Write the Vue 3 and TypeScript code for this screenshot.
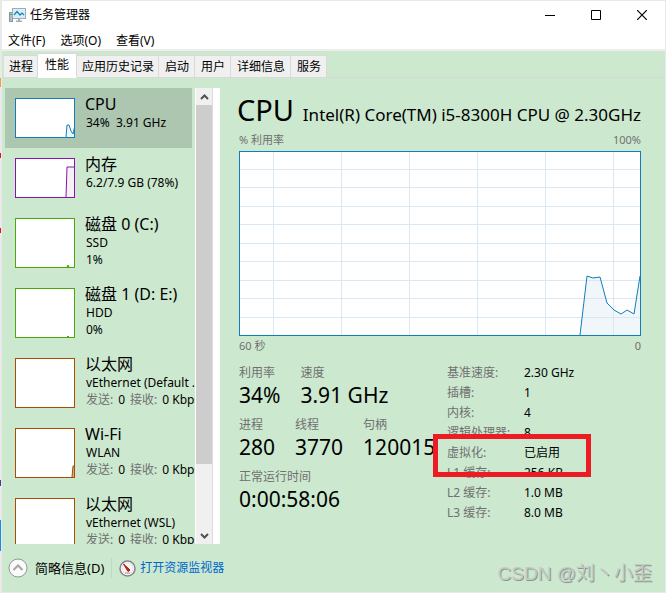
<script setup lang="ts">
import { ref } from 'vue'

interface Device {
  name: string
  lines: string[]
  network?: boolean
  color: string
  fill: string
  short?: boolean
  path?: string
}

const menus = ['文件(F)', '选项(O)', '查看(V)']
const tabs = ['进程', '性能', '应用历史记录', '启动', '用户', '详细信息', '服务']
const activeTab = ref('性能')

const devices: Device[] = [
  { name: 'CPU', lines: ['34%  3.91 GHz'], color: '#117dbb', fill: '#f1f6fa', short: true, path: 'M51 39L52 27H54L56 33L58 36L60 27' },
  { name: '内存', lines: ['6.2/7.9 GB (78%)'], color: '#8b12ae', fill: '#f4f2f4', short: true, path: 'M51 39L52 9H60' },
  { name: '磁盘 0 (C:)', lines: ['SSD', '1%'], color: '#4da60c', fill: '#4da60c', path: 'M52 49L53 47L54 49' },
  { name: '磁盘 1 (D: E:)', lines: ['HDD', '0%'], color: '#4da60c', fill: '#4da60c', path: 'M52 49L53 48L54 49' },
  { name: '以太网', lines: ['vEthernet (Default ...'], network: true, color: '#a74f01', fill: '#f3e5d8' },
  { name: 'Wi-Fi', lines: ['WLAN'], network: true, color: '#a74f01', fill: '#d9ad85', path: 'M57 49L58 38H60' },
  { name: '以太网', lines: ['vEthernet (WSL)'], network: true, color: '#a74f01', fill: '#f3e5d8' },
]
const selected = ref(0)

const stats = [
  [['利用率', '34%'], ['速度', '3.91 GHz']],
  [['进程', '280'], ['线程', '3770'], ['句柄', '120015']],
  [['正常运行时间', '0:00:58:06']],
]

const specs = [
  ['基准速度:', '2.30 GHz'],
  ['插槽:', '1'],
  ['内核:', '4'],
  ['逻辑处理器:', '8'],
  ['虚拟化:', '已启用'],
  ['L1 缓存:', '256 KB'],
  ['L2 缓存:', '1.0 MB'],
  ['L3 缓存:', '8.0 MB'],
]

const columns = [34, 102, 170, 238, 306, 374]
const rows = [19, 37, 56, 74, 93, 111, 130, 148, 167]
</script>

<template>
  <div class="window">
    <header class="top">
      <div class="titlebar">
        <svg class="app-icon" width="17" height="16" viewBox="0 0 17 16" aria-hidden="true">
          <rect x="0.5" y="5.5" width="3" height="9" fill="#b9bcbf" stroke="#8f9498" />
          <path d="M1 7.500H3" stroke="#4caf50" />
          <rect x="3.500" y="1.500" width="13" height="10" fill="#d5f0fb" stroke="#a3abb0" />
          <path d="M5 8L8 4.500L11 8L13 6L15 8" fill="none" stroke="#1784c0" stroke-width="1.200" />
          <path d="M9 12H11V13.500H13V15H7V13.500H9Z" fill="#a9adb0" />
        </svg>
        <h1>任务管理器</h1>
        <div class="controls">
          <button type="button" aria-label="最小化">
            <svg width="10" height="11" viewBox="0 0 10 11"><path d="M0 5.500H10" stroke="#000" /></svg>
          </button>
          <button type="button" aria-label="最大化">
            <svg width="10" height="10" viewBox="0 0 10 10"><path d="M.5.5H9.500V9.500H.5Z" fill="none" stroke="#000" /></svg>
          </button>
          <button type="button" aria-label="关闭">
            <svg width="10" height="10" viewBox="0 0 10 10"><path d="M0 0L10 10M10 0L0 10" stroke="#000" stroke-width="1.200" /></svg>
          </button>
        </div>
      </div>
      <nav class="menu">
        <button v-for="menu in menus" :key="menu" type="button">{{ menu }}</button>
      </nav>
    </header>

    <nav class="tabs" role="tablist">
      <button
        v-for="tab in tabs"
        :key="tab"
        type="button"
        role="tab"
        class="tab"
        :class="{ active: tab === activeTab }"
        :aria-selected="tab === activeTab"
        @click="activeTab = tab"
      >{{ tab }}</button>
    </nav>

    <div class="content">
      <aside class="sidebar">
        <div class="devices">
          <button
            v-for="(device, index) in devices"
            :key="index"
            type="button"
            class="device"
            :class="{ selected: index === selected }"
            @click="selected = index"
          >
            <svg class="thumb" width="60" :height="device.short ? 40 : 50" aria-hidden="true">
              <rect width="60" height="50" fill="#fff" />
              <path v-if="device.path" :d="device.path + 'V50H51'" :fill="device.fill" />
              <path v-if="device.path" :d="device.path" fill="none" :stroke="device.color" />
              <rect x="0.5" y="0.5" width="59" :height="device.short ? 39 : 49" fill="none" :stroke="device.color" />
            </svg>
            <span class="text">
              <span class="name">{{ device.name }}</span>
              <span v-for="line in device.lines" :key="line" class="line">{{ line }}</span>
              <span v-if="device.network" class="line traffic">
                <span class="muted">发送:</span><span>0</span><span class="muted">接收:</span><span>0 Kbps</span>
              </span>
            </span>
          </button>
        </div>
        <div class="scrollbar">
          <button type="button" aria-label="向上滚动">
            <svg width="9" height="6" viewBox="0 0 9 6"><path d="M1 5L4.500 1.500L8 5" fill="none" stroke="#505050" stroke-width="2" /></svg>
          </button>
          <div class="track"><div class="handle"></div></div>
          <button type="button" aria-label="向下滚动">
            <svg width="9" height="6" viewBox="0 0 9 6"><path d="M1 1L4.500 4.500L8 1" fill="none" stroke="#505050" stroke-width="2" /></svg>
          </button>
        </div>
        <div class="gutter"></div>
      </aside>

      <main class="detail">
        <div class="heading">
          <h2>CPU</h2>
          <span class="model">Intel(R) Core(TM) i5-8300H CPU @ 2.30GHz</span>
        </div>
        <div class="axis above"><span>% 利用率</span><span>100%</span></div>
        <svg class="chart" viewBox="0 0 402 185" preserveAspectRatio="none" role="img" aria-label="% 利用率">
          <rect width="402" height="185" fill="#fff" />
          <path d="M341 184L348 125L354 127L361 126L368 152L375 159L382 163L388 159L395 163L401 125V184Z" fill="#f1f6fa" />
          <path v-for="x in columns" :key="'c' + x" :d="`M${x}.5 1V184`" class="grid" />
          <path v-for="y in rows" :key="'r' + y" :d="`M1 ${y - 1}.5H401`" class="grid" />
          <path d="M341 184L348 125L354 127L361 126L368 152L375 159L382 163L388 159L395 163L401 125" class="curve" />
          <rect x="0.5" y="0.5" width="401" height="184" class="frame" />
        </svg>
        <div class="axis below"><span>60 秒</span><span>0</span></div>

        <div class="figures">
          <div class="stats">
            <dl v-for="(row, index) in stats" :key="index" class="stat-row">
              <div v-for="stat in row" :key="stat[0]">
                <dt>{{ stat[0] }}</dt>
                <dd>{{ stat[1] }}</dd>
              </div>
            </dl>
          </div>
          <dl class="specs">
            <div v-for="spec in specs" :key="spec[0]" class="spec" :class="{ marked: spec[0] === '虚拟化:' }">
              <dt>{{ spec[0] }}</dt>
              <dd>{{ spec[1] }}</dd>
            </div>
          </dl>
        </div>
      </main>
    </div>

    <footer class="footer">
      <button type="button" class="fewer">
        <svg width="20" height="20" viewBox="0 0 20 20" aria-hidden="true">
          <circle cx="10" cy="10" r="9" fill="#fafafa" stroke="#969696" />
          <path d="M5.500 12L10 7.500L14.500 12" fill="none" stroke="#a5a5a5" stroke-width="2" />
        </svg>
        <span>简略信息(D)</span>
      </button>
      <a href="#resource-monitor" class="monitor">
        <svg width="17" height="17" viewBox="0 0 17 17" aria-hidden="true">
          <circle cx="8.500" cy="8.500" r="7.500" fill="#fff" stroke="#858585" stroke-width="1.500" />
          <circle cx="8.500" cy="8.500" r="5.500" fill="#f5f5f5" stroke="#c8c8c8" stroke-dasharray="1 1" />
          <path d="M4.500 4L11 10L9 11.500Z" fill="#d51d1d" stroke="#b51414" />
          <path d="M6 13H11" stroke="#999" />
        </svg>
        <span>打开资源监视器</span>
      </a>
    </footer>
    <div class="watermark">CSDN @刘丶小歪</div>
  </div>
</template>

<style>
body {
  margin: 0;
}
</style>

<style scoped>
.window {
  position: relative;
  box-sizing: border-box;
  display: flex;
  flex-direction: column;
  height: 100vh;
  border: 1px solid #e9e9e9;
  border-left-width: 2px;
  background: #cce8cf;
  color: #000;
  font: 12px/16px "Noto Sans", "Noto Sans CJK SC", sans-serif;
}

/* Sliver of the windows behind, visible along the left edge */
.window::before {
  content: "";
  position: absolute;
  inset: 0 auto 0 -2px;
  width: 1px;
  background: linear-gradient(
    #e9e9e9 13%, #f2a03d 13% 14.500%, #e9e9e9 14.500% 25.700%,
    #e81123 25.700% 26.600%, #e9e9e9 26.600% 38.400%,
    #e81123 38.400% 39.200%, #e9e9e9 39.200% 81%,
    #4a3f7a 81% 82%, #e9e9e9 82% 87.800%,
    #1e88e5 87.800% 93%, #e9e9e9 93%
  );
}

h1,
h2,
dl,
dd {
  margin: 0;
  font-weight: 400;
}

button {
  padding: 0;
  border: 0;
  background: none;
  color: inherit;
  font: inherit;
  text-align: left;
}

svg {
  display: block;
  flex: none;
}

.top {
  flex: none;
  border-bottom: 2px solid #eee;
  background: #fff;
}

.titlebar {
  display: flex;
  align-items: center;
  height: 28px;
  padding-left: 7px;
}

h1 {
  margin-left: 4px;
  font-size: 12px;
  line-height: 18px;
}

.controls {
  display: flex;
  margin-left: auto;
}

.controls button {
  display: grid;
  place-items: center;
  width: 46px;
  height: 28px;
}

.menu {
  display: flex;
  gap: 15px;
  height: 20px;
  padding: 0 6px;
}

.menu button {
  line-height: 20px;
  height: 24px;
}

.tabs {
  display: flex;
  flex: none;
  align-items: flex-end;
  height: 27px;
  padding-left: 2px;
  box-shadow: inset 0 -1px #d5d9d5;
}

.tab {
  box-sizing: border-box;
  height: 23px;
  padding: 0 5px 0 6px;
  border: 1px solid #d9d9d9;
  border-left: 0;
  background: #f0f0f0;
  white-space: nowrap;
}

.tab:first-child,
.tab:nth-child(3) {
  padding: 0 4px 0 5px;
}

.tab.active {
  height: 25px;
  padding: 0 7px 2px;
  border-bottom-color: #fff;
  background: #fff;
}

.content {
  display: flex;
  flex: 1;
  min-height: 0;
  padding-top: 10px;
}

.sidebar {
  display: flex;
  flex: none;
  margin-left: 3px;
}

.devices {
  width: 190px;
  overflow: hidden;
}

.device {
  display: flex;
  align-items: flex-start;
  gap: 10px;
  width: 100%;
  padding: 10px 0 10px 10px;
}

.device.selected {
  width: 187px;
  background: #adc6b0;
}

.text {
  display: flex;
  flex-direction: column;
  height: 0;
  margin-top: -4px;
  white-space: pre;
}

.name {
  font-size: 16px;
  line-height: 20px;
}

.line {
  margin-left: 1px;
  line-height: 17px;
}

.traffic {
  display: flex;
  gap: 5px;
}

.muted,
dt,
.axis {
  color: #707070;
}

.scrollbar {
  display: flex;
  flex-direction: column;
  width: 16px;
  border-left: 1px solid #fff;
  border-right: 1px solid #dcdcdc;
  background: #f0f0f0;
}

.scrollbar button {
  display: grid;
  place-items: center;
  height: 17px;
}

.track {
  flex: 1;
}

.handle {
  height: 85%;
  background: #cdcdcd;
}

.gutter {
  width: 7px;
  background: #fff;
}

.detail {
  flex: 1;
  min-width: 0;
  padding: 0 24px 0 19px;
}

.heading {
  display: flex;
  align-items: baseline;
  justify-content: space-between;
  height: 43px;
  white-space: nowrap;
}

h2 {
  margin-left: -2px;
  font-size: 29px;
  line-height: 44px;
}

.model {
  font-size: 17px;
}

.axis {
  display: flex;
  justify-content: space-between;
  font-size: 11px;
}

.above {
  height: 20px;
  line-height: 18px;
}

.below {
  height: 27px;
  line-height: 20px;
}

.chart {
  width: 100%;
  height: 185px;
}

.grid {
  stroke: #d9e8f2;
}

.curve,
.frame {
  fill: none;
  stroke: #117dbb;
}

.figures {
  display: flex;
}

.stats {
  flex: none;
  width: 208px;
}

.stat-row {
  display: flex;
  gap: 20px;
  height: 52px;
  white-space: nowrap;
}

.stat-row dt {
  line-height: 20px;
}

.stat-row dd {
  font-size: 21px;
  line-height: 24px;
}

.spec {
  position: relative;
  display: flex;
  height: 20px;
  line-height: 20px;
  white-space: nowrap;
}

.spec dt {
  width: 77px;
}

.marked::after {
  content: "";
  position: absolute;
  top: -9px;
  left: -14px;
  box-sizing: border-box;
  width: 158px;
  height: 43px;
  border: 5px solid #ed1c24;
  z-index: 1;
}

.footer {
  display: flex;
  flex: none;
  align-items: center;
  height: 48px;
  padding-left: 6px;
}

.fewer,
.monitor {
  display: flex;
  align-items: center;
  white-space: nowrap;
}

.fewer {
  gap: 7px;
  padding-right: 7px;
  border-right: 1px solid #c1d8c4;
  font-size: 13px;
}

.monitor {
  gap: 4px;
  padding-left: 7px;
  color: #0066cc;
  text-decoration: none;
}

.watermark {
  position: absolute;
  right: 13px;
  bottom: 6px;
  color: #c4cbc5;
  font: 19px/24px "Liberation Sans", "Noto Sans CJK SC", sans-serif;
  text-shadow: 1px 1px #8c988e;
}
</style>
